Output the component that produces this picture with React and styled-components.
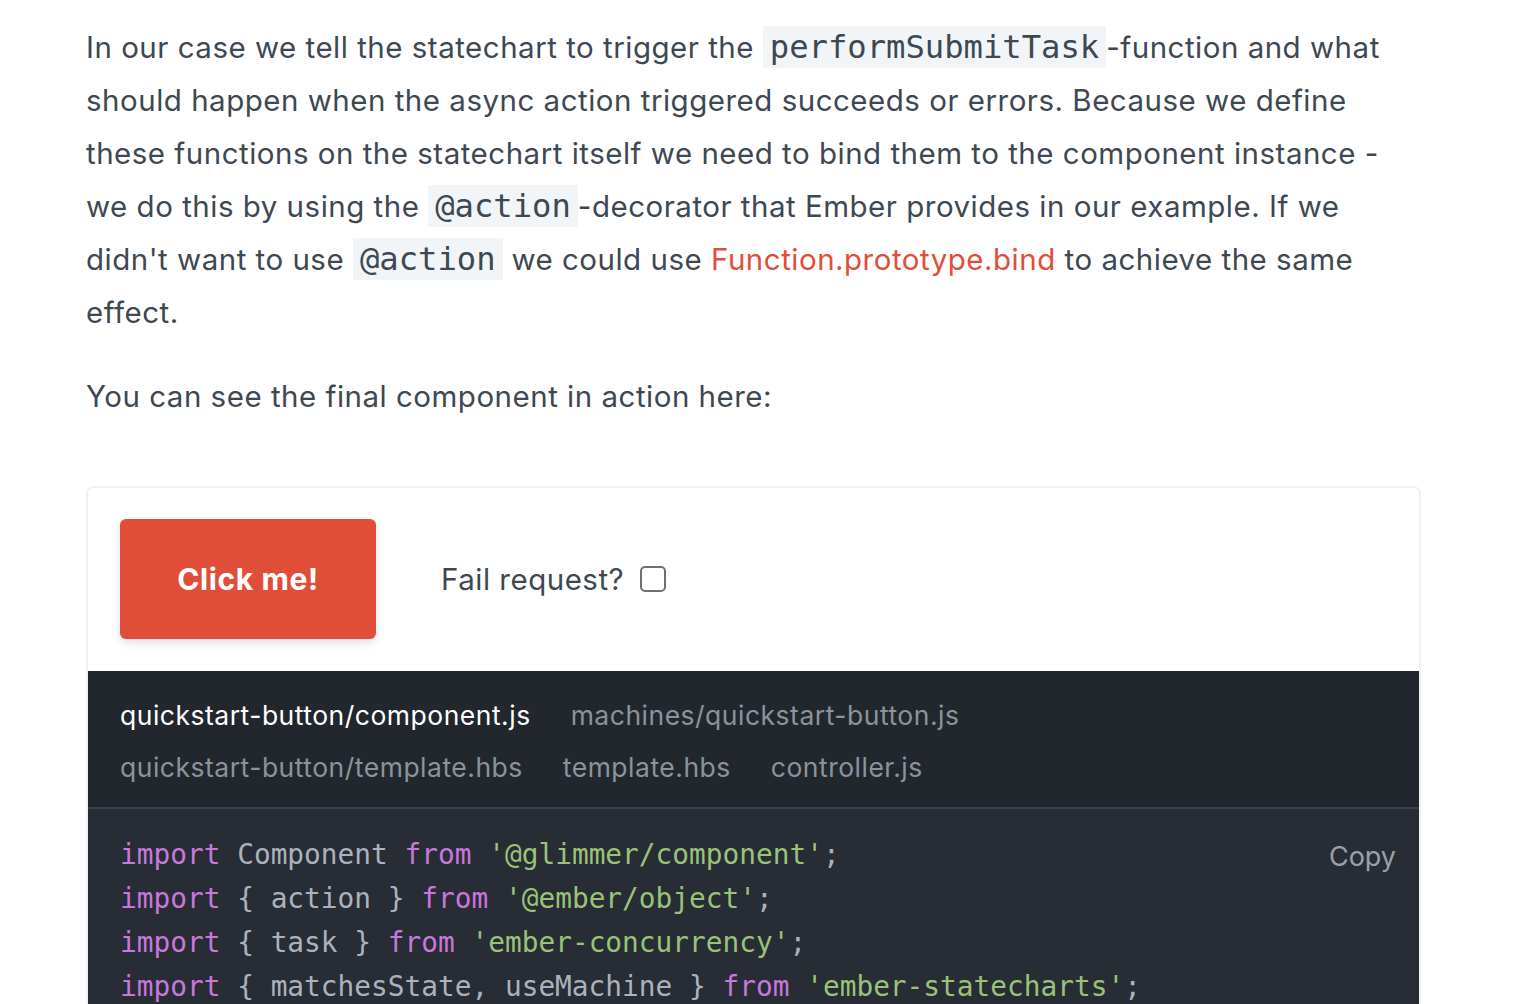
import React from "react";
import styled, { createGlobalStyle } from "styled-components";

const Global = createGlobalStyle`
  html, body { margin: 0; padding: 0; background: #ffffff; }
  body { font-family: Inter, "Open Sans", "Liberation Sans", sans-serif; }
`;

const Article = styled.article`
  width: 1335px;
  padding: 21px 0 0 86px;
  color: #3d4852;
`;

const Para = styled.p`
  margin: 0 0 31px;
  font-size: 29.5px;
  line-height: 53px;
  letter-spacing: 0.5px;
`;

const InlineCode = styled.code`
  font-family: "DejaVu Sans Mono", "Liberation Mono", monospace;
  font-size: 32.2px;
  letter-spacing: 0;
  background: #f1f5f8;
  padding: 2px 7px;
  color: #3d4852;
`;

const Link = styled.a`
  color: #e04e39;
  text-decoration: none;
`;

const Card = styled.section`
  margin-top: 63px;
  border: 2px solid #edf2f7;
  border-radius: 8px;
  overflow: hidden;
  width: 1331px;
`;

const Demo = styled.div`
  display: flex;
  align-items: center;
  gap: 65px;
  padding: 31px 32px 32px;
`;

const PrimaryButton = styled.button`
  width: 256px;
  height: 120px;
  border: none;
  border-radius: 6px;
  background: #e04e39;
  color: #ffffff;
  font-family: Inter, "Liberation Sans", sans-serif;
  font-weight: 700;
  font-size: 30px;
  letter-spacing: 0.6px;
  box-shadow: 0 4px 10px rgba(0, 0, 0, 0.12);
  cursor: pointer;
`;

const CheckLabel = styled.label`
  display: flex;
  align-items: center;
  gap: 16px;
  font-size: 29.5px;
  letter-spacing: 0.5px;
  color: #3d4852;
`;

const Box = styled.span`
  display: inline-block;
  width: 22px;
  height: 22px;
  border: 2px solid #6f6f6f;
  border-radius: 5px;
`;

const Dark = styled.div`
  background: #22272e;
`;

const Tabs = styled.nav`
  display: flex;
  flex-wrap: wrap;
  column-gap: 40px;
  padding: 18px 32px 14px;
  border-bottom: 2px solid #3b424b;
`;

const Tab = styled.span`
  font-size: 26.5px;
  letter-spacing: 0.5px;
  line-height: 52px;
  color: ${(p) => (p.$active ? "#ffffff" : "#8b939c")};
`;

const CodeArea = styled.div`
  position: relative;
  background: #282c34;
  padding: 24px 32px 40px;
`;

const Pre = styled.pre`
  margin: 0;
  font-family: "DejaVu Sans Mono", "Liberation Mono", monospace;
  font-size: 27.8px;
  line-height: 44px;
  color: #abb2bf;
`;

const Kw = styled.span`
  color: #c678dd;
`;

const Str = styled.span`
  color: #98c379;
`;

const CopyButton = styled.button`
  position: absolute;
  top: 30px;
  right: 17px;
  background: none;
  border: none;
  font-family: Inter, "Liberation Sans", sans-serif;
  font-size: 27px;
  color: #9aa1a9;
  cursor: pointer;
`;

const lines = [
  [["k", "import"], ["p", " Component "], ["k", "from"], ["p", " "], ["s", "'@glimmer/component'"], ["p", ";"]],
  [["k", "import"], ["p", " { action } "], ["k", "from"], ["p", " "], ["s", "'@ember/object'"], ["p", ";"]],
  [["k", "import"], ["p", " { task } "], ["k", "from"], ["p", " "], ["s", "'ember-concurrency'"], ["p", ";"]],
  [["k", "import"], ["p", " { matchesState, useMachine } "], ["k", "from"], ["p", " "], ["s", "'ember-statecharts'"], ["p", ";"]],
  [["p", ""]],
  [["k", "import"], ["p", " quickstartButtonMachine "], ["k", "from"], ["p", " "], ["s", "'../machines/quickstart-button'"], ["p", ";"]],
];

function Token({ t, v }) {
  if (t === "k") return <Kw>{v}</Kw>;
  if (t === "s") return <Str>{v}</Str>;
  return <>{v}</>;
}

export default function App() {
  return (
    <>
      <Global />
      <Article>
        <Para>
          In our case we tell the statechart to trigger the <InlineCode>performSubmitTask</InlineCode>-function and what
          should happen when the async action triggered succeeds or errors. Because we define these functions on the
          statechart itself we need to bind them to the component instance - we do this by using the{" "}
          <InlineCode>@action</InlineCode>-decorator that Ember provides in our example. If we didn't want to use{" "}
          <InlineCode>@action</InlineCode> we could use <Link href="#">Function.prototype.bind</Link> to achieve the
          same effect.
        </Para>
        <Para>You can see the final component in action here:</Para>
        <Card>
          <Demo>
            <PrimaryButton>Click me!</PrimaryButton>
            <CheckLabel>
              Fail request? <Box />
            </CheckLabel>
          </Demo>
          <Dark>
            <Tabs>
              <Tab $active>quickstart-button/component.js</Tab>
              <Tab>machines/quickstart-button.js</Tab>
              <Tab>quickstart-button/template.hbs</Tab>
              <Tab>template.hbs</Tab>
              <Tab>controller.js</Tab>
            </Tabs>
            <CodeArea>
              <CopyButton>Copy</CopyButton>
              <Pre>
                {lines.map((line, i) => (
                  <div key={i}>
                    {line.map(([t, v], j) => (
                      <Token key={j} t={t} v={v} />
                    ))}
                    {line.length === 1 && line[0][1] === "" ? "\u00a0" : null}
                  </div>
                ))}
              </Pre>
            </CodeArea>
          </Dark>
        </Card>
      </Article>
    </>
  );
}
